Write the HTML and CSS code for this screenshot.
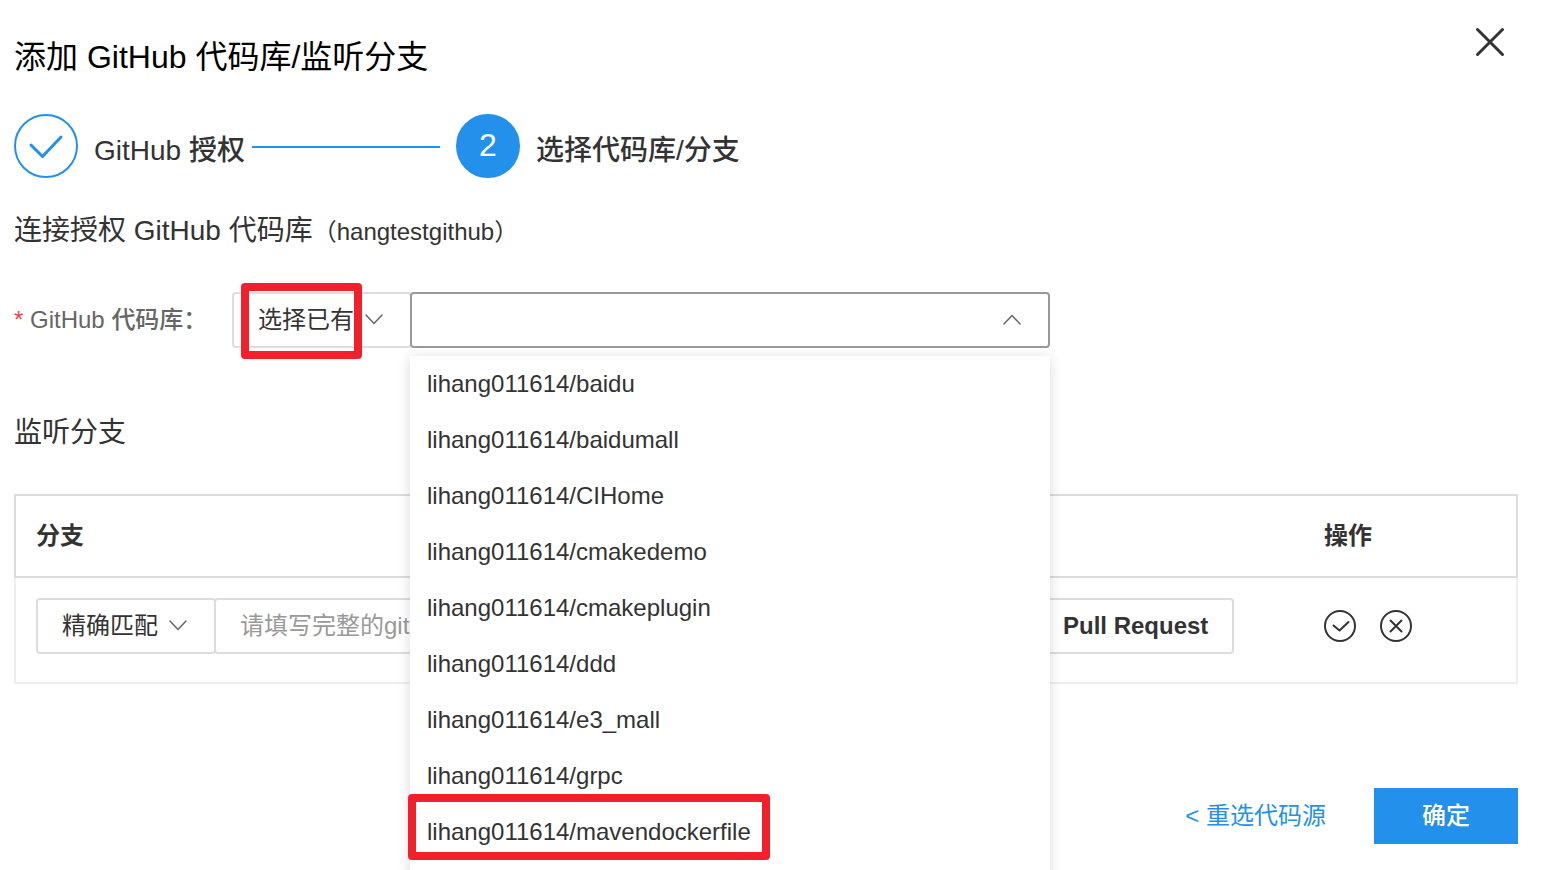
FILE: index.html
```html
<!DOCTYPE html>
<html lang="zh-CN">
<head>
    <meta charset="UTF-8">
    <meta name="viewport" content="width=device-width, initial-scale=1.0">
    <title>添加 GitHub 代码库/监听分支</title>
    <link rel="stylesheet" href="styles.css">
</head>
<body>
    <main class="dialog">
        <header class="dialog-header">
            <h1>添加 GitHub 代码库/监听分支</h1>
            <button type="button" class="close" aria-label="关闭">
                <svg width="30" height="32" viewBox="0 0 30 32"><path d="M2.500 3.500l25 25M27.500 3.500l-25 25"/></svg>
            </button>
        </header>

        <ol class="steps">
            <li class="step">
                <span class="step-icon">
                    <svg width="64" height="64" viewBox="0 0 64 64"><path d="M17 31l11.500 11.500L47 23"/></svg>
                </span>
                <span class="step-title">GitHub 授权</span>
                <span class="step-line"></span>
            </li>
            <li class="step">
                <span class="step-icon active">2</span>
                <span class="step-title">选择代码库/分支</span>
            </li>
        </ol>

        <h2 class="account">连接授权 GitHub 代码库<small>（hangtestgithub）</small></h2>

        <div class="form-row">
            <label for="repo"><span class="required">*</span> GitHub 代码库：</label>
            <div class="select source">
                <select id="source" aria-label="代码库来源">
                    <option>选择已有</option>
                </select>
                <svg class="arrow" width="18" height="11" viewBox="0 0 18 11"><path d="M1 1l8 8.500L17 1"/></svg>
                <span class="mark mark-source"></span>
            </div>
            <div class="select repo">
                <select id="repo">
                    <option></option>
                </select>
                <svg class="arrow" width="18" height="11" viewBox="0 0 18 11"><path d="M1 10l8-8.500L17 10"/></svg>
                <ul class="menu">
                    <li>lihang011614/baidu</li>
                    <li>lihang011614/baidumall</li>
                    <li>lihang011614/CIHome</li>
                    <li>lihang011614/cmakedemo</li>
                    <li>lihang011614/cmakeplugin</li>
                    <li>lihang011614/ddd</li>
                    <li>lihang011614/e3_mall</li>
                    <li>lihang011614/grpc</li>
                    <li>lihang011614/mavendockerfile<span class="mark mark-repo"></span></li>
                </ul>
            </div>
        </div>

        <h2 class="section-title">监听分支</h2>

        <table class="branches">
            <thead>
                <tr>
                    <th>分支</th>
                    <th class="col-event"></th>
                    <th class="col-action">操作</th>
                </tr>
            </thead>
            <tbody>
                <tr>
                    <td>
                        <div class="branch-input">
                            <div class="select match">
                                <select id="match" aria-label="匹配方式">
                                    <option>精确匹配</option>
                                </select>
                                <svg class="arrow" width="18" height="11" viewBox="0 0 18 11"><path d="M1 1l8 8.500L17 1"/></svg>
                            </div>
                            <input type="text" id="branch" aria-label="分支" placeholder="请填写完整的git">
                        </div>
                    </td>
                    <td><button type="button" class="event">Pull Request</button></td>
                    <td>
                        <div class="actions">
                            <button type="button" aria-label="保存">
                                <svg width="32" height="32" viewBox="0 0 32 32"><circle cx="16" cy="16" r="15"/><path d="M9.500 15.500l6 5 9-8.500"/></svg>
                            </button>
                            <button type="button" aria-label="取消">
                                <svg width="32" height="32" viewBox="0 0 32 32"><circle cx="16" cy="16" r="15"/><path d="M10.500 10.500l11 11M21.500 10.500l-11 11"/></svg>
                            </button>
                        </div>
                    </td>
                </tr>
            </tbody>
        </table>

        <footer class="dialog-footer">
            <a href="#">&lt; 重选代码源</a>
            <button type="button" class="confirm">确定</button>
        </footer>
    </main>
</body>
</html>
```
FILE: styles.css
```css
* {
    box-sizing: border-box;
}
body {
    margin: 0;
    font-family: "Liberation Sans", "Noto Sans CJK SC", sans-serif;
    font-size: 24px;
    line-height: 32px;
    color: #333;
    background: #fff;
}
button, input, select {
    font: inherit;
    color: inherit;
}
button {
    padding: 0;
    border: none;
    background: none;
    cursor: pointer;
}
svg {
    display: block;
    fill: none;
    stroke: #333;
    stroke-width: 2;
    stroke-linecap: round;
    stroke-linejoin: round;
}
h1, h2 {
    margin: 0;
    font-weight: normal;
}
.dialog {
    min-height: 100vh;
    padding: 26px 24px 26px 14px;
    overflow: hidden;
}
.dialog-header {
    display: flex;
    justify-content: space-between;
    align-items: flex-start;
    height: 88px;
}
h1 {
    font-size: 32px;
    line-height: 62px;
    color: #000;
}
.close {
    margin-right: 13px;
}
.close svg {
    stroke-width: 3;
}

.steps {
    display: flex;
    margin: 0;
    padding: 0;
    list-style: none;
}
.step {
    display: flex;
    align-items: center;
}
.step-icon {
    width: 64px;
    height: 64px;
    margin-right: 16px;
    border: 2px solid #2391eb;
    border-radius: 50%;
    font-size: 32px;
    line-height: 58px;
    text-align: center;
}
.step-icon svg {
    margin: -2px;
    stroke: #2391eb;
    stroke-width: 3;
}
.step-icon.active {
    background: #2391eb;
    color: #fff;
}
.step-title {
    padding-top: 10px;
    font-size: 28px;
    font-weight: 500;
}
.step-line {
    width: 188px;
    height: 2px;
    margin: 2px 16px 0 7px;
    background: #2391eb;
}

.account {
    margin-top: 33px;
    font-size: 28px;
    line-height: 40px;
}
.account small {
    font-size: 24px;
    line-height: 24px;
}

.form-row {
    display: flex;
    margin-top: 41px;
    line-height: 56px;
}
.form-row label {
    width: 218px;
    font-weight: 500;
    color: #666;
}
.required {
    color: #e54545;
}
.select {
    position: relative;
    height: 56px;
}
.select select {
    width: 100%;
    height: 100%;
    padding: 0 24px;
    border: 2px solid #ddd;
    border-radius: 4px;
    background: #fff;
    line-height: 32px;
    appearance: none;
}
.arrow {
    position: absolute;
    top: 22px;
    right: 29px;
    stroke: #666;
    stroke-width: 1.5;
    pointer-events: none;
}
.source {
    width: 180px;
}
.repo {
    width: 640px;
    margin-left: -2px;
}
.repo select {
    border-color: #999;
}
.menu {
    position: absolute;
    z-index: 1;
    top: 64px;
    left: 0;
    right: 0;
    margin: 0;
    padding: 0 0 24px;
    background: #fff;
    box-shadow: 0 2px 12px rgba(0, 0, 0, 0.15);
    list-style: none;
}
.menu li {
    position: relative;
    padding: 0 17px;
}
.mark {
    position: absolute;
    border: 8px solid #f2202a;
    border-radius: 4px;
    pointer-events: none;
}
.mark-source {
    top: -9px;
    left: 9px;
    width: 121px;
    height: 76px;
}
.mark-repo {
    top: -10px;
    left: -2px;
    width: 362px;
    height: 66px;
}

.section-title {
    margin-top: 65px;
    font-size: 28px;
    line-height: 40px;
}
.branches {
    width: 100%;
    margin-top: 41px;
    border-collapse: separate;
    border-spacing: 0;
    table-layout: fixed;
}
.branches th {
    height: 84px;
    padding: 0 20px;
    border: solid #dcdcdc;
    border-width: 2px 0;
    text-align: left;
}
.branches td {
    height: 106px;
    padding: 20px 20px 28px;
    border-bottom: 2px solid #eee;
}
.branches th:first-child {
    border-left-width: 2px;
}
.branches th:last-child {
    border-right-width: 2px;
}
.branches td:first-child {
    border-left: 2px solid #eee;
}
.branches td:last-child {
    border-right: 2px solid #eee;
}
.col-event {
    width: 287px;
}
.col-action {
    width: 214px;
}
.branch-input {
    display: flex;
}
.match {
    width: 180px;
}
.branch-input input {
    flex: 1;
    min-width: 0;
    margin-left: -2px;
    padding: 0 24px;
    border: 2px solid #ddd;
    border-radius: 4px;
}
.branch-input input::placeholder {
    color: #999;
}
.event {
    height: 56px;
    padding: 0 24px;
    border: 2px solid #ddd;
    border-radius: 4px;
    font-weight: bold;
}
.actions {
    display: flex;
    gap: 24px;
}

.dialog-footer {
    display: flex;
    justify-content: flex-end;
    align-items: center;
    gap: 48px;
    margin-top: 104px;
}
.dialog-footer a {
    color: #2391eb;
    text-decoration: none;
}
.confirm {
    width: 144px;
    height: 56px;
    background: #2391eb;
    color: #fff;
    font-weight: 500;
}
```
